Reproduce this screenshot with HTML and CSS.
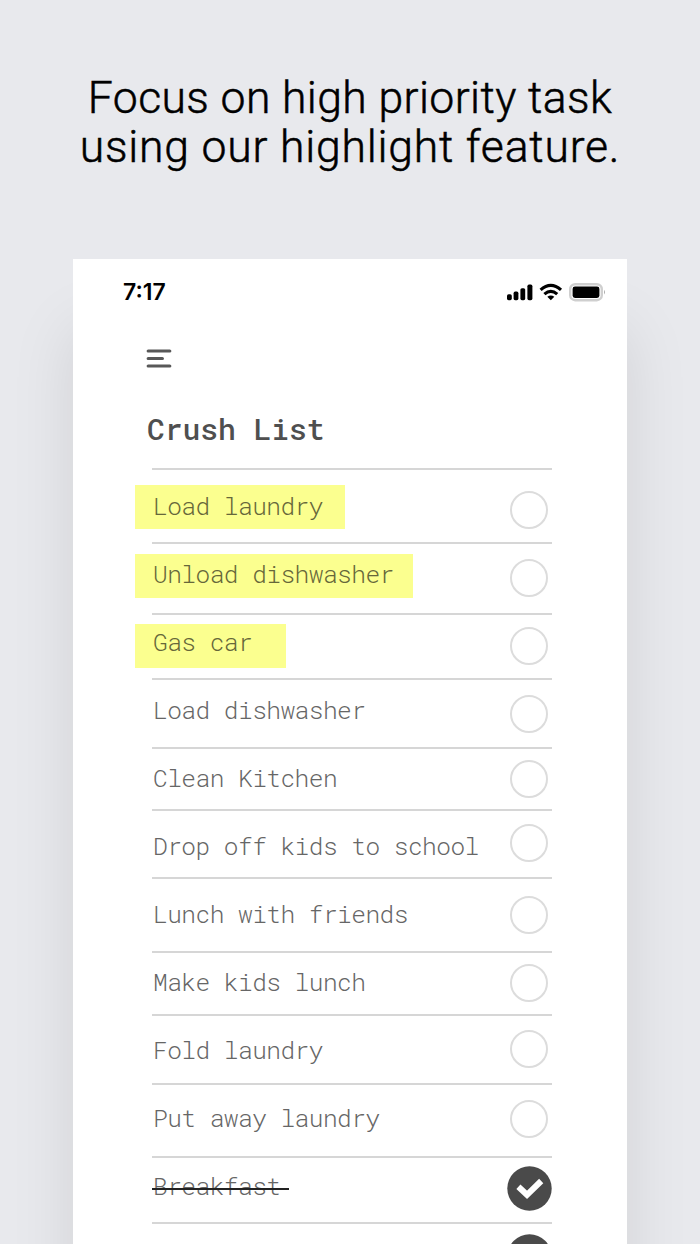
FILE: index.html
```html
<!DOCTYPE html>
<html lang="en">
<head>
<meta charset="utf-8">
<title>Crush List</title>
<link rel="stylesheet" href="styles.css">
</head>
<body>
<h1 class="headline">
  <span class="line_one">Focus on high priority task</span>
  <span class="line_two">using our highlight feature.</span>
</h1>
<div class="phone">
  <div class="status_bar">
    <span class="time">7:17</span>
    <svg class="status_icons" width="100" height="20" viewBox="0 0 100 20">
      <rect x="1" y="11.3" width="4.8" height="5.9" rx="1.6"/>
      <rect x="7.6" y="8.6" width="4.8" height="8.6" rx="1.6"/>
      <rect x="14.4" y="5.2" width="4.8" height="12" rx="1.6"/>
      <rect x="21.4" y="1.6" width="5" height="15.6" rx="1.6"/>
      <g fill="none" stroke="#000" stroke-width="3.2">
        <path d="M34.6 6.9Q44.8 -2.1 55 6.9"/>
        <path d="M38.4 11.1Q44.8 5.5 51.2 11.1"/>
      </g>
      <path d="M41.3 13.8Q44.8 11.2 48.3 13.8L44.8 17.2Z"/>
      <rect x="64.2" y="1.2" width="31.6" height="16" rx="5" fill="#fff" stroke="#cfcfcf" stroke-width="2.4"/>
      <rect x="66.6" y="3.6" width="26.8" height="11.4" rx="2.4"/>
      <path d="M98 6.8Q100 9.2 98 11.6Z" fill="#aaa"/>
    </svg>
  </div>
  <svg class="menu_icon" width="26" height="20" viewBox="0 0 26 20">
    <path d="M2.2 2H23.8M2.2 9.5H16.4M2.2 17H23.8" stroke="#585858" stroke-width="3.2" stroke-linecap="round"/>
  </svg>
  <h2 class="list_title">Crush List</h2>
  <ul class="list">
    <li><span class="task marked">Load laundry</span><span class="check"></span></li>
    <li><span class="task marked">Unload dishwasher</span><span class="check"></span></li>
    <li><span class="task marked">Gas car</span><span class="check"></span></li>
    <li><span class="task">Load dishwasher</span><span class="check"></span></li>
    <li><span class="task">Clean Kitchen</span><span class="check"></span></li>
    <li><span class="task">Drop off kids to school</span><span class="check"></span></li>
    <li><span class="task">Lunch with friends</span><span class="check"></span></li>
    <li><span class="task">Make kids lunch</span><span class="check"></span></li>
    <li><span class="task">Fold laundry</span><span class="check"></span></li>
    <li><span class="task">Put away laundry</span><span class="check"></span></li>
    <li><span class="task done">Breakfast</span>
      <svg class="checked" width="45" height="45" viewBox="0 0 45 45"><circle cx="22.5" cy="22.5" r="22.2" fill="#4a4a4a"/><path d="M11.4 20.8L20 28.8L34.2 15" fill="none" stroke="#fff" stroke-width="6"/></svg></li>
    <li><span class="task">Snacks for kids</span>
      <svg class="checked" width="45" height="45" viewBox="0 0 45 45"><circle cx="22.5" cy="22.5" r="22.2" fill="#4a4a4a"/><path d="M11.4 20.8L20 28.8L34.2 15" fill="none" stroke="#fff" stroke-width="6"/></svg></li>
  </ul>
</div>
</body>
</html>
```
FILE: styles.css
```css
*{
  box-sizing: border-box;
}
body{
  margin: 0;
  height: 1244px;
  overflow: hidden;
  background-color: #e8e9ed;
}

.headline{
  margin: 0;
  padding-top: 74px;
  height: 259px;
  font-family: Roboto, sans-serif;
  font-size: 44.5px;
  font-weight: 300;
  line-height: 48.5px;
  text-align: center;
  color: #000;
  -webkit-text-stroke: .5px #000;
}
.headline span{
  display: block;
  white-space: nowrap;
}
.line_one{
  letter-spacing: .4px;
}
.line_two{
  letter-spacing: .8px;
}

.phone{
  width: 554px;
  height: 985px;
  overflow: hidden;
  margin-left: 73px;
  padding-top: 23px;
  background: #fff;
  box-shadow: 0 70px 60px rgba(0,0,0,.1);
}
.status_bar{
  display: flex;
  justify-content: space-between;
  padding: 0 21px 0 50px;
  height: 67px;
}
.time{
  font-family: Inter, sans-serif;
  font-size: 23px;
  font-weight: 600;
  line-height: 21px;
}
.status_icons{
  margin-top: 1px;
}
.menu_icon{
  display: block;
  margin-left: 73px;
}
.list_title{
  margin: 40px 0 0 74px;
  height: 59px;
  font-family: "Roboto Mono", "DejaVu Sans Mono", monospace;
  font-size: 29.6px;
  font-weight: 500;
  line-height: 40px;
  color: #4f4f4f;
}

.list{
  list-style: none;
  width: 400px;
  margin: 0 0 0 79px;
  padding: 0;
  border-top: 2px solid #d6d6d6;
}
/* rows are spaced by hand: height, label top, circle top */
.list li{
  display: flex;
  justify-content: space-between;
  align-items: flex-start;
  height: var(--row);
  border-bottom: 2px solid #d6d6d6;
}
.list li:nth-child(1){ --row: 74px; --label: 15px; --line: 42px; --circle: 21px; }
.list li:nth-child(2){ --row: 71px; --label: 10px; --line: 40px; --circle: 15px; }
.list li:nth-child(3){ --row: 65px; --label: 9px; --line: 36px; --circle: 12px; }
.list li:nth-child(4){ --row: 69px; --label: 8px; --circle: 15px; }
.list li:nth-child(5){ --row: 62px; --label: 7px; --circle: 11px; }
.list li:nth-child(6){ --row: 68px; --label: 13px; --circle: 13px; }
.list li:nth-child(7){ --row: 74px; --label: 13px; --circle: 17px; }
.list li:nth-child(8){ --row: 63px; --label: 7px; --circle: 11px; }
.list li:nth-child(9){ --row: 69px; --label: 12px; --circle: 14px; }
.list li:nth-child(10){ --row: 73px; --label: 11px; --circle: 15px; }
.list li:nth-child(11){ --row: 66px; --label: 6px; --line: 43px; --circle: 8px; }
.list li:nth-child(12){ --row: 68px; --label: 7px; --circle: 10px; }

.task{
  margin-top: var(--label);
  height: 44px;
  padding-left: 1px;
  font-family: "Roboto Mono", "DejaVu Sans Mono", monospace;
  font-size: 24.5px;
  font-weight: 300;
  letter-spacing: -.54px;
  line-height: var(--line, 44px);
  white-space: nowrap;
  color: #666;
}
.marked{
  margin-left: -17px;
  padding: 0 22px 0 18px;
  background: #fbff8f;
  color: #66673a;
}
.list li:nth-child(2) .marked{
  padding-right: 19px;
}
.list li:nth-child(3) .marked{
  padding-right: 34px;
}
.done{
  position: relative;
}
.done::after{
  content: "";
  position: absolute;
  left: 0;
  top: 24px;
  width: 137px;
  height: 2px;
  background: #222;
}
.check{
  width: 38px;
  height: 38px;
  margin: var(--circle) 4px 0 0;
  border: 2px solid #dcdcdc;
  border-radius: 50%;
}
.checked{
  flex: none;
  margin-top: var(--circle);
}
```
